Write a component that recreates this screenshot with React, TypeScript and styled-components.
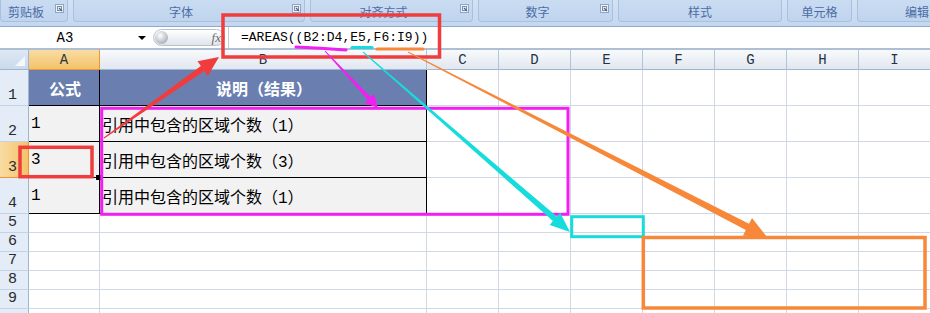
import React from "react";
import styled, { createGlobalStyle } from "styled-components";

const GlobalStyle = createGlobalStyle`
  html, body {
    margin: 0;
    padding: 0;
    background: #fff;
  }
`;

const groups = [
  { label: "剪贴板", w: 68, launcher: true },
  { label: "字体", w: 232, launcher: true },
  { label: "对齐方式", w: 163, launcher: true },
  { label: "数字", w: 135, launcher: true },
  { label: "样式", w: 164, launcher: false },
  { label: "单元格", w: 65, launcher: false },
  { label: "编辑", w: 120, launcher: false },
];

const columns = ["A", "B", "C", "D", "E", "F", "G", "H", "I"];

const tableRows = [
  { a: "1", b: "引用中包含的区域个数（1）" },
  { a: "3", b: "引用中包含的区域个数（3）" },
  { a: "1", b: "引用中包含的区域个数（1）" },
];

// tapered arrow polygon, thin at the tail, wide at the head
function arrowPoints(
  x1: number,
  y1: number,
  x2: number,
  y2: number,
  tail: number,
  shaft: number,
  headLen: number,
  headW: number
) {
  const dx = x2 - x1;
  const dy = y2 - y1;
  const len = Math.hypot(dx, dy);
  const ux = dx / len;
  const uy = dy / len;
  const nx = -uy;
  const ny = ux;
  const bx = x2 - ux * headLen;
  const by = y2 - uy * headLen;
  const pts = [
    [x1 + (nx * tail) / 2, y1 + (ny * tail) / 2],
    [bx + (nx * shaft) / 2, by + (ny * shaft) / 2],
    [bx + (nx * headW) / 2, by + (ny * headW) / 2],
    [x2, y2],
    [bx - (nx * headW) / 2, by - (ny * headW) / 2],
    [bx - (nx * shaft) / 2, by - (ny * shaft) / 2],
    [x1 - (nx * tail) / 2, y1 - (ny * tail) / 2],
  ];
  return pts.map((p) => p.map((v) => v.toFixed(1)).join(",")).join(" ");
}

const App = () => {
  return (
    <Page>
      <GlobalStyle />
      <Ribbon>
        {groups.map((g) => (
          <Group key={g.label} $w={g.w}>
            <GroupLabel>{g.label}</GroupLabel>
            {g.launcher && (
              <Launcher width="9" height="9" viewBox="0 0 9 9">
                <rect x="0.5" y="0.5" width="8" height="8" fill="#eef3fa" stroke="#8ea6c6" />
                <rect x="2.5" y="2.5" width="4" height="4" fill="none" stroke="#7d8fa8" />
                <path d="M4 4 L7 7" stroke="#4f6383" strokeWidth="1.2" />
              </Launcher>
            )}
          </Group>
        ))}
      </Ribbon>

      <FormulaRow>
        <NameBox>
          <NameText>A3</NameText>
          <DropArrow />
        </NameBox>
        <Capsule>
          <Knob />
          <Fx>fx</Fx>
        </Capsule>
        <FormulaInput>=AREAS((B2:D4,E5,F6:I9))</FormulaInput>
      </FormulaRow>

      <Sheet>
        <Corner>
          <svg width="10" height="10" viewBox="0 0 10 10">
            <polygon points="10,0 10,10 0,10" fill="#f4f7fb" />
          </svg>
        </Corner>
        {columns.map((c) => (
          <ColHead key={c} $active={c === "A"}>
            {c}
          </ColHead>
        ))}

        <RowHead>1</RowHead>
        <Cell $kind="head" $align="center">
          公式
        </Cell>
        <Cell $kind="head" $align="center">
          说明（结果）
        </Cell>
        {columns.slice(2).map((c) => (
          <Cell key={c} $kind="plain" />
        ))}

        {tableRows.map((r, i) => (
          <React.Fragment key={i}>
            <RowHead $active={i === 1}>{i + 2}</RowHead>
            <Cell $kind="data">{r.a}</Cell>
            <Cell $kind="data">{r.b}</Cell>
            {columns.slice(2).map((c) => (
              <Cell key={c} $kind="plain" />
            ))}
          </React.Fragment>
        ))}

        {[5, 6, 7, 8, 9, 10].map((n) => (
          <React.Fragment key={n}>
            {/* row 10 lies below the picture's edge, only its top line shows */}
            <RowHead>{n < 10 ? n : ""}</RowHead>
            {columns.map((c) => (
              <Cell key={c} $kind="plain" />
            ))}
          </React.Fragment>
        ))}
      </Sheet>

      <Overlay width="930" height="313" viewBox="0 0 930 313">
        <rect x="96" y="175" width="5" height="5" fill="#000" />

        <rect x="223" y="15" width="216.5" height="42" fill="none" stroke="#f03c3c" strokeWidth="3.5" />
        <rect x="20" y="147.3" width="72" height="29.4" fill="none" stroke="#f03c3c" strokeWidth="3.5" />
        <rect x="101.7" y="108.3" width="466.3" height="106" fill="none" stroke="#f020f0" strokeWidth="3" />
        <rect x="571.7" y="216.7" width="71.6" height="20" fill="none" stroke="#17dcdc" strokeWidth="3" />
        <rect x="643.3" y="237.5" width="281.7" height="70.5" fill="none" stroke="#f7883a" strokeWidth="3.5" />

        <path d="M296 47 Q320 48 346 50" fill="none" stroke="#f020f0" strokeWidth="3" strokeLinecap="round" />
        <path d="M352 47.5 L372 47.5" stroke="#17dcdc" strokeWidth="3" strokeLinecap="round" />
        <path d="M377 49 L423 49" stroke="#f7883a" strokeWidth="3" strokeLinecap="round" />

        <polygon points={arrowPoints(104, 138, 219, 57, 1, 6, 20, 18)} fill="#f03c3c" />
        <polygon points={arrowPoints(325, 51, 378, 108, 1, 4, 13, 13)} fill="#f020f0" />
        <polygon points={arrowPoints(363, 52, 570, 232, 1, 6, 20, 16)} fill="#17dcdc" />
        <polygon points={arrowPoints(408, 52, 767, 237, 1, 7, 22, 20)} fill="#f7883a" />
      </Overlay>
    </Page>
  );
};

export default App;

const Page = styled.div`
  position: relative;
  width: 930px;
  height: 313px;
  overflow: hidden;
  background: #fff;
  font-family: "Noto Sans CJK SC", sans-serif;
`;

const Ribbon = styled.div`
  display: flex;
  gap: 5px;
  height: 27px;
  box-sizing: border-box;
  padding-bottom: 4px;
  background: linear-gradient(#d3e2f4, #c4d7ef);
  border-bottom: 1px solid #8ca9d0;
`;

const Group = styled.div<{ $w: number }>`
  flex: 0 0 ${(p) => p.$w}px;
  display: flex;
  align-items: center;
  box-sizing: border-box;
  border: 1px solid #a9c0de;
  border-top: none;
  border-radius: 0 0 4px 4px;
  background: linear-gradient(#cadcf2, #bfd4ee);
`;

const GroupLabel = styled.span`
  flex: 1;
  text-align: center;
  color: #4b6ca4;
  font-size: 12px;
  line-height: 14px;
  padding-top: 2px;
`;

const Launcher = styled.svg`
  flex: 0 0 auto;
  margin: 0 3px 4px 4px;
`;

const FormulaRow = styled.div`
  display: flex;
  align-items: center;
  height: 21px;
  background: #fff;
  border-bottom: 2px solid #aebfd4;
`;

const NameBox = styled.div`
  width: 150px;
  display: flex;
  align-items: center;
`;

const NameText = styled.span`
  flex: 1;
  text-align: center;
  padding-right: 8px;
  font-family: "Liberation Mono", monospace;
  font-size: 14px;
  color: #000;
`;

const DropArrow = styled.span`
  width: 0;
  height: 0;
  margin-right: 4px;
  border-left: 4px solid transparent;
  border-right: 4px solid transparent;
  border-top: 4px solid #000;
`;

const Capsule = styled.div`
  width: 72px;
  height: 17px;
  margin-left: 3px;
  box-sizing: border-box;
  display: flex;
  align-items: center;
  justify-content: space-between;
  padding: 0 3px 0 1px;
  border: 1px solid #b7c2d1;
  border-radius: 9px;
  background: linear-gradient(#ffffff, #dfe4eb);
`;

const Knob = styled.span`
  width: 13px;
  height: 13px;
  border-radius: 50%;
  background: radial-gradient(circle at 40% 35%, #ffffff, #8e97a2);
`;

const Fx = styled.span`
  font-family: "Liberation Serif", serif;
  font-style: italic;
  font-size: 13px;
  color: #6d6d6d;
`;

const FormulaInput = styled.div`
  flex: 1;
  height: 100%;
  display: flex;
  align-items: center;
  margin-left: 3px;
  padding-left: 12px;
  border-left: 1px solid #c2ccd9;
  font-family: "Liberation Mono", monospace;
  font-size: 13px;
  color: #000;
`;

const Sheet = styled.div`
  display: grid;
  grid-template-columns: 29px 71px 327px repeat(7, 72px);
  grid-template-rows: 20px repeat(4, 36px) repeat(6, 19px);
`;

const Corner = styled.div`
  box-sizing: border-box;
  display: flex;
  align-items: flex-end;
  justify-content: flex-end;
  padding: 0 3px 3px 0;
  background: linear-gradient(#dfe8f5, #cbd9ec);
  border-right: 1px solid #9eb6ce;
  border-bottom: 1px solid #9eb6ce;
`;

const ColHead = styled.div<{ $active?: boolean }>`
  box-sizing: border-box;
  display: flex;
  align-items: center;
  justify-content: center;
  font-family: "Liberation Mono", monospace;
  font-size: 14px;
  color: #253444;
  background: ${(p) =>
    p.$active
      ? "linear-gradient(#f9dca3, #f3c36a)"
      : "linear-gradient(#f8fafc, #e1e7f0)"};
  border-right: 1px solid ${(p) => (p.$active ? "#f29436" : "#b3c4d8")};
  border-bottom: 1px solid ${(p) => (p.$active ? "#f29436" : "#9eb6ce")};
`;

const RowHead = styled.div<{ $active?: boolean }>`
  box-sizing: border-box;
  display: flex;
  align-items: flex-end;
  justify-content: center;
  padding: 0 3px 0 0;
  font-family: "Liberation Mono", monospace;
  font-size: 15px;
  line-height: 18px;
  color: #2b2b2b;
  background: ${(p) =>
    p.$active ? "linear-gradient(90deg, #f9dca3, #f3c36a)" : "#e4ecf7"};
  border-right: 1px solid ${(p) => (p.$active ? "#f29436" : "#9eb6ce")};
  border-bottom: 1px solid ${(p) => (p.$active ? "#f29436" : "#c5d2e3")};
`;

const Cell = styled.div<{ $kind: "head" | "data" | "plain"; $align?: string }>`
  box-sizing: border-box;
  display: flex;
  align-items: center;
  justify-content: ${(p) => (p.$align === "center" ? "center" : "flex-start")};
  padding-left: 2px;
  white-space: nowrap;
  font-family: "Liberation Mono", "Noto Sans CJK SC", monospace;
  font-size: 16px;
  font-weight: ${(p) => (p.$kind === "head" ? 700 : 400)};
  color: ${(p) => (p.$kind === "head" ? "#fff" : "#000")};
  background: ${(p) =>
    p.$kind === "head" ? "#6a7fb0" : p.$kind === "data" ? "#f2f2f2" : "#fff"};
  border-right: 1px solid ${(p) => (p.$kind === "plain" ? "#d0d7e5" : "#000")};
  border-bottom: 1px solid ${(p) => (p.$kind === "plain" ? "#d0d7e5" : "#000")};
`;

const Overlay = styled.svg`
  position: absolute;
  left: 0;
  top: 0;
  pointer-events: none;
`;
